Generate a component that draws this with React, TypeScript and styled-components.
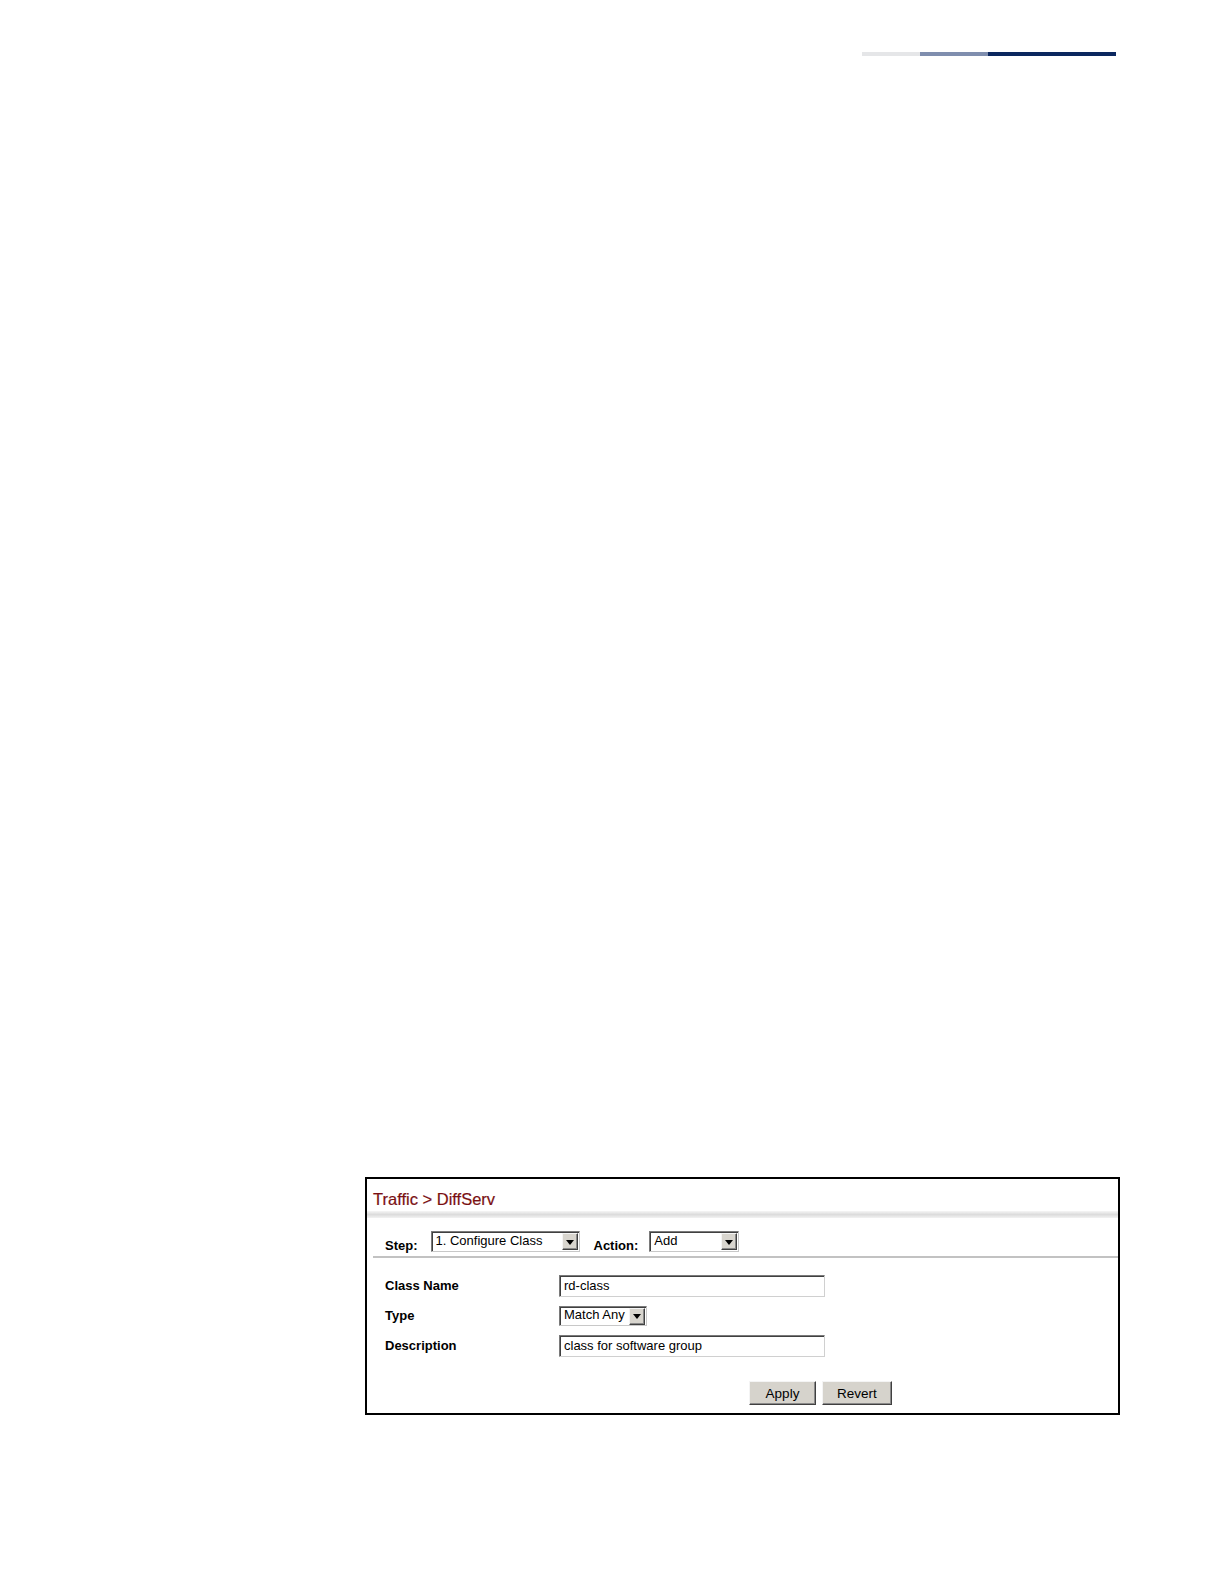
import React from "react";
import styled, { createGlobalStyle } from "styled-components";

const GlobalStyle = createGlobalStyle`
  html, body {
    margin: 0;
    padding: 0;
    background: #ffffff;
  }
  body {
    font-family: "Liberation Sans", Arial, sans-serif;
    color: #000000;
  }
`;

const Page = styled.div`
  width: 1224px;
  height: 1584px;
  padding-top: 52px;
  box-sizing: border-box;
`;

const TopBar = styled.div`
  display: flex;
  margin-left: 862px;
  width: 254px;
  height: 4px;
`;

const BarSegment = styled.div<{ $w: number; $c: string }>`
  width: ${({ $w }) => $w}px;
  background: ${({ $c }) => $c};
`;

const Panel = styled.section`
  margin: 1121px 0 0 365px;
  width: 755px;
  height: 238px;
  box-sizing: border-box;
  border: 2px solid #000000;
  display: flex;
  flex-direction: column;
`;

const Title = styled.h1`
  margin: 0;
  padding: 10px 0 0 6px;
  height: 20px;
  font-size: 16.5px;
  line-height: 20px;
  font-weight: normal;
  color: #7a0f12;
  -webkit-text-stroke: 0.2px #7a0f12;
`;

const Band = styled.div`
  margin-top: 2px;
  height: 7px;
  background: linear-gradient(#f6f6f6, #dcdcdc 50%, #f2f2f2);
`;

const StepRow = styled.div`
  display: flex;
  align-items: flex-end;
  margin-top: 13px;
  padding-left: 18px;
  height: 21px;
`;

const StepLabel = styled.span<{ $gap: number; $ml?: number }>`
  font-size: 13px;
  font-weight: bold;
  line-height: 16px;
  margin-left: ${({ $ml }) => $ml || 0}px;
  margin-right: ${({ $gap }) => $gap}px;
  margin-bottom: -2px;
`;

const SelectBox = styled.div<{ $w: number; $h?: number }>`
  display: flex;
  align-items: center;
  width: ${({ $w }) => $w}px;
  height: ${({ $h }) => $h || 21}px;
  box-sizing: border-box;
  border-top: 1px solid #7a7a7a;
  border-left: 1px solid #7a7a7a;
  border-right: 1px solid #c8c8c8;
  border-bottom: 1px solid #c8c8c8;
  box-shadow: inset 1px 1px 0 #404040;
  background: #ffffff;
  padding: 0 1px 0 4px;
`;

const SelectText = styled.span`
  flex: 1;
  font-size: 13px;
  line-height: 16px;
  margin-top: -2px;
  white-space: nowrap;
`;

const ArrowButton = styled.span`
  width: 16px;
  height: 17px;
  box-sizing: border-box;
  display: flex;
  align-items: center;
  justify-content: center;
  background: #d8d5ce;
  border-top: 1px solid #f4f4f4;
  border-left: 1px solid #f4f4f4;
  border-right: 1px solid #404040;
  border-bottom: 1px solid #404040;
  box-shadow: inset -1px -1px 0 #8a8a8a;

  &::after {
    content: "";
    width: 0;
    height: 0;
    border-left: 4px solid transparent;
    border-right: 4px solid transparent;
    border-top: 5px solid #000000;
    margin-top: 1px;
  }
`;

const Divider = styled.div`
  margin: 4px 0 0 6px;
  height: 2px;
  background: #c2c2c2;
`;

const Form = styled.div`
  display: grid;
  grid-template-columns: 174px 1fr;
  align-items: center;
  row-gap: 9px;
  margin-top: 17px;
  padding-left: 18px;
`;

const FieldLabel = styled.span`
  font-size: 13px;
  font-weight: bold;
  line-height: 16px;
`;

const TextBox = styled.div`
  width: 266px;
  height: 22px;
  box-sizing: border-box;
  border-top: 1px solid #7a7a7a;
  border-left: 1px solid #7a7a7a;
  border-right: 1px solid #d0d0d0;
  border-bottom: 1px solid #d0d0d0;
  box-shadow: inset 1px 1px 0 #404040;
  padding: 2px 3px 0 4px;
  font-size: 13px;
  line-height: 16px;
  background: #ffffff;
`;

const Buttons = styled.div`
  display: flex;
  gap: 6px;
  margin-top: 24px;
  padding-left: 382px;
`;

const Button = styled.button<{ $w: number }>`
  width: ${({ $w }) => $w}px;
  height: 24px;
  box-sizing: border-box;
  padding: 0;
  background: #d6d3cc;
  border-top: 1px solid #f4f4f4;
  border-left: 1px solid #f4f4f4;
  border-right: 1px solid #404040;
  border-bottom: 1px solid #404040;
  box-shadow: inset -1px -1px 0 #8a8a8a;
  font-family: "Liberation Sans", Arial, sans-serif;
  font-size: 13.5px;
  color: #000000;
`;

export default function App() {
  return (
    <Page>
      <GlobalStyle />
      <TopBar>
        <BarSegment $w={58} $c="#e5e6e8" />
        <BarSegment $w={68} $c="#7f8eae" />
        <BarSegment $w={128} $c="#0b275f" />
      </TopBar>
      <Panel>
        <Title>Traffic &gt; DiffServ</Title>
        <Band />
        <StepRow>
          <StepLabel $gap={13}>Step:</StepLabel>
          <SelectBox $w={149}>
            <SelectText>1. Configure Class</SelectText>
            <ArrowButton />
          </SelectBox>
          <StepLabel $gap={11} $ml={14}>
            Action:
          </StepLabel>
          <SelectBox $w={90}>
            <SelectText>Add</SelectText>
            <ArrowButton />
          </SelectBox>
        </StepRow>
        <Divider />
        <Form>
          <FieldLabel>Class Name</FieldLabel>
          <TextBox>rd-class</TextBox>
          <FieldLabel>Type</FieldLabel>
          <SelectBox $w={88} $h={20}>
            <SelectText>Match Any</SelectText>
            <ArrowButton />
          </SelectBox>
          <FieldLabel>Description</FieldLabel>
          <TextBox>class for software group</TextBox>
        </Form>
        <Buttons>
          <Button $w={67}>Apply</Button>
          <Button $w={70}>Revert</Button>
        </Buttons>
      </Panel>
    </Page>
  );
}
